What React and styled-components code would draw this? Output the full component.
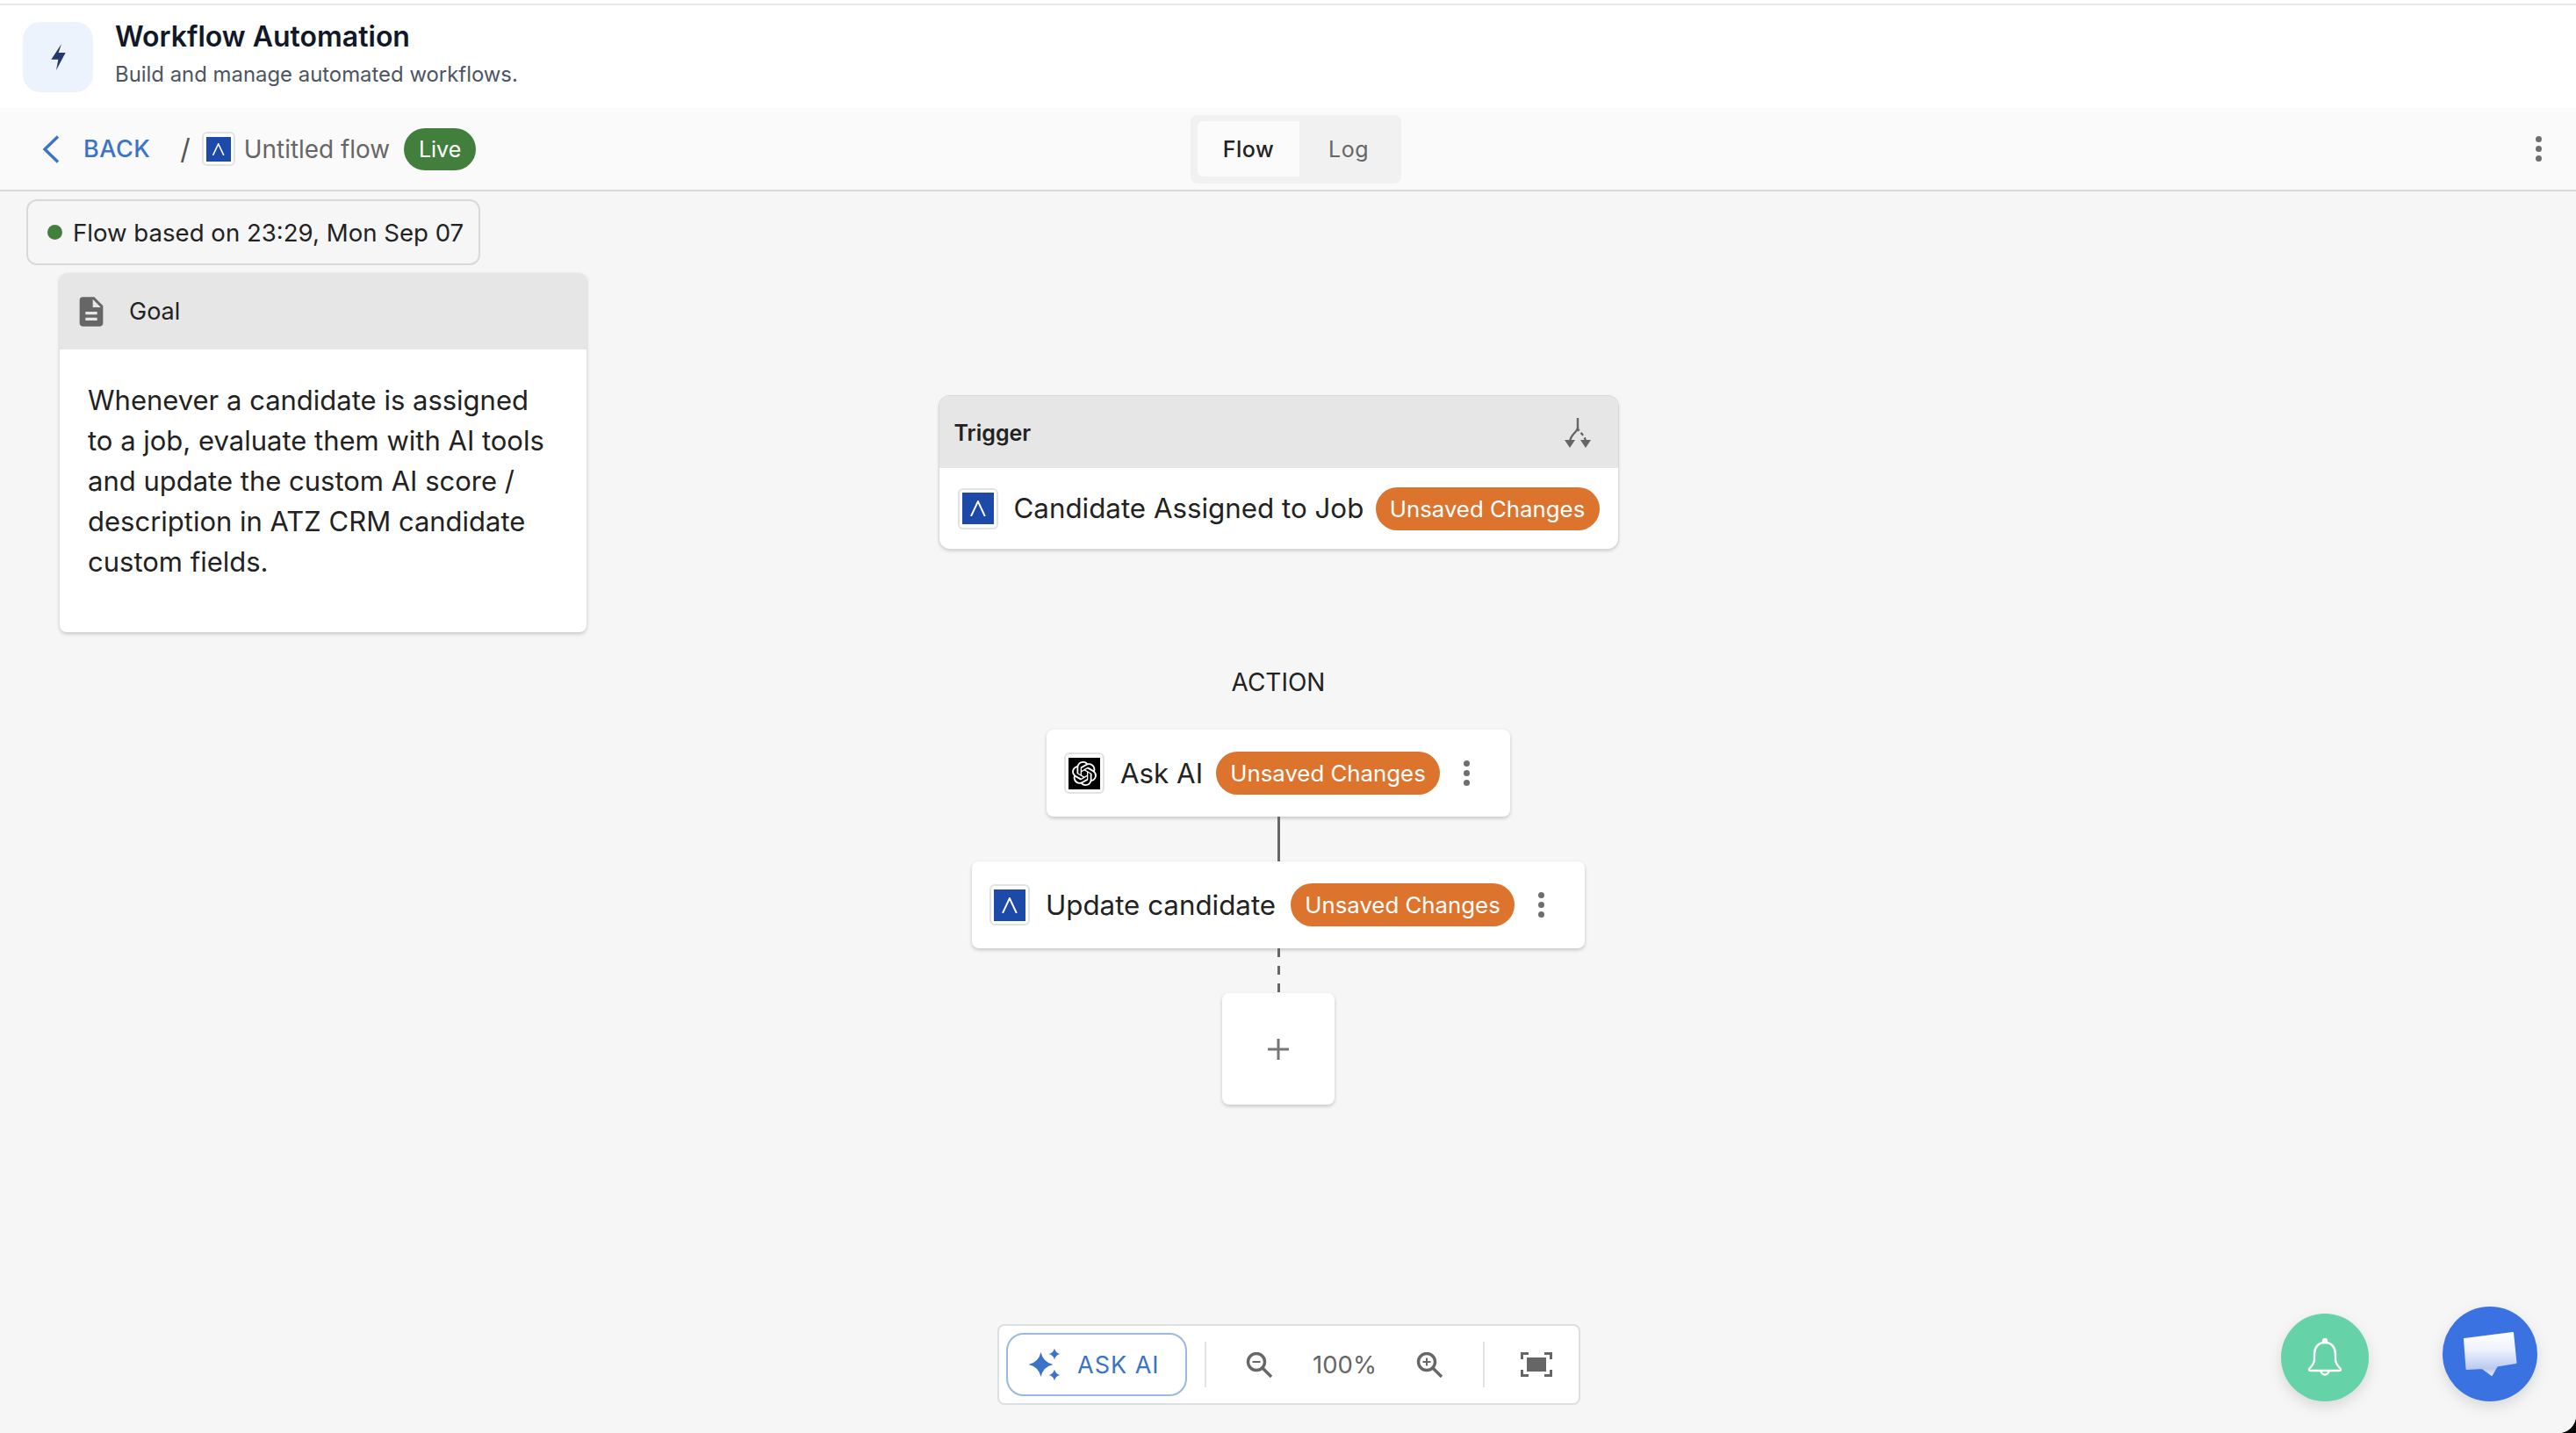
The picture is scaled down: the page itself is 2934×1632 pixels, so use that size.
import React from 'react';
import styled, { createGlobalStyle } from 'styled-components';
import { SiOpenai } from 'react-icons/si';

const GlobalStyle = createGlobalStyle`
  html, body {
    margin: 0;
    padding: 0;
    background: #000;
  }
  * {
    box-sizing: border-box;
  }
`;

const Page = styled.div`
  position: relative;
  display: flex;
  flex-direction: column;
  width: 2934px;
  height: 1632px;
  padding-top: 4px;
  overflow: hidden;
  background: #fff;
  border-bottom-right-radius: 20px;
  font-family: Inter, "Liberation Sans", sans-serif;
  color: #222;
`;

const Header = styled.header`
  display: flex;
  align-items: center;
  gap: 25px;
  flex: 0 0 119px;
  padding-left: 26px;
  border-top: 2px solid #e5e7eb;
`;

const HeaderIcon = styled.div`
  display: flex;
  align-items: center;
  justify-content: center;
  width: 80px;
  height: 80px;
  border-radius: 20px;
  background: #edf3fd;
`;

const HeaderText = styled.div`
  display: flex;
  flex-direction: column;
  gap: 10px;
  margin-top: -6px;
`;

const Title = styled.h1`
  margin: 0;
  font-size: 32px;
  line-height: 36px;
  font-weight: 600;
  color: #111827;
`;

const Subtitle = styled.p`
  margin: 0;
  font-size: 23.9px;
  line-height: 30px;
  color: #4b5563;
`;

const NavBar = styled.nav`
  display: grid;
  grid-template-columns: 1308px 240px 1fr;
  align-items: center;
  flex: 0 0 95px;
  padding-left: 48px;
  padding-right: 31px;
  background: #fafafa;
  border-bottom: 2px solid #d9d9d9;
`;

const Crumbs = styled.div`
  display: flex;
  align-items: center;
`;

const BackLink = styled.a`
  display: flex;
  align-items: center;
  gap: 27px;
  font-size: 27px;
  font-weight: 500;
  letter-spacing: 0.5px;
  color: #3a73c8;
`;

const Slash = styled.span`
  margin: 0 13px 0 34px;
  font-size: 32px;
  color: #555;
`;

const FlowName = styled.span`
  margin: 0 16px 0 10px;
  font-size: 27.9px;
  color: #666;
`;

const LiveBadge = styled.span`
  display: flex;
  align-items: center;
  justify-content: center;
  width: 82px;
  height: 48px;
  border-radius: 24px;
  background: #437f3c;
  color: #fff;
  font-size: 25px;
`;

const Tabs = styled.div`
  display: flex;
  align-items: center;
  height: 78px;
  padding: 0 4px 0 8px;
  border-radius: 8px;
  background: #f1f1f1;
`;

const Tab = styled.button`
  flex: none;
  width: ${(p) => (p.$active ? '116px' : '112px')};
  height: 63px;
  padding: 0;
  border: 0;
  border-radius: 6px 0 0 6px;
  background: ${(p) => (p.$active ? '#fbfbfb' : 'transparent')};
  color: ${(p) => (p.$active ? '#222' : '#666')};
  font-family: inherit;
  font-size: 25px;
  font-weight: ${(p) => (p.$active ? 500 : 400)};
  letter-spacing: 0.5px;
`;

const NavMenu = styled.div`
  justify-self: end;
  display: flex;
`;

const Dots = styled.span`
  display: flex;
  flex-direction: column;
  align-items: center;
  justify-content: center;
  gap: 4px;
  width: 24px;
  flex: none;

  i {
    width: 7px;
    height: 7px;
    border-radius: 50%;
    background: #6e6e6e;
  }
`;

const Canvas = styled.main`
  position: relative;
  flex: 1;
  display: flex;
  flex-direction: column;
  align-items: center;
  padding: 233px 22px 0 0;
  background: #f6f6f6;
`;

const LeftRail = styled.aside`
  position: absolute;
  left: 30px;
  top: 9px;
  display: flex;
  flex-direction: column;
  gap: 9px;
  width: 638px;
`;

const StatusChip = styled.div`
  display: flex;
  align-items: center;
  gap: 12px;
  width: 517px;
  height: 75px;
  padding-left: 22px;
  border: 2px solid #d9d9d9;
  border-radius: 12px;
  font-size: 27.6px;
  color: #222;

  i {
    width: 17px;
    height: 17px;
    border-radius: 50%;
    background: #437f3c;
  }
`;

const GoalCard = styled.section`
  align-self: flex-end;
  width: 600px;
  height: 409px;
  border-radius: 8px;
  background: #fff;
  overflow: hidden;
  box-shadow: 0 2px 4px rgba(0, 0, 0, 0.2);
`;

const GoalHeader = styled.div`
  display: flex;
  align-items: center;
  gap: 23px;
  height: 87px;
  padding-left: 16px;
  background: #e6e6e6;
  font-size: 27px;
`;

const GoalBody = styled.p`
  margin: 0;
  padding: 35px 0 0 32px;
  max-width: 560px;
  font-size: 31px;
  line-height: 46px;
  color: #222;
`;

const TriggerCard = styled.section`
  width: 773px;
  border-radius: 12px;
  overflow: hidden;
  background: #fff;
  box-shadow: 0 0 0 1px #d8d8d8, 0 2px 4px rgba(0, 0, 0, 0.2);
`;

const TriggerHeader = styled.div`
  display: flex;
  align-items: center;
  justify-content: space-between;
  height: 82px;
  padding: 2px 31px 0 17px;
  background: #e6e6e6;
  font-size: 25px;
  font-weight: 600;
`;

const TriggerRow = styled.div`
  display: flex;
  align-items: center;
  gap: 18px;
  height: 92px;
  padding: 0 21px 0 21px;
`;

const NodeLabel = styled.span`
  flex: 1;
  min-width: 0;
  font-size: 31.3px;
  white-space: nowrap;
  color: #222;
`;

const ActionLabel = styled.div`
  margin: 136px 0 38px;
  font-size: 28px;
  line-height: 32px;
  color: #222;
`;

const NodeCard = styled.div`
  display: flex;
  align-items: center;
  gap: 18px;
  width: ${(p) => p.$width}px;
  height: 99px;
  padding: 0 38px 0 20px;
  border-radius: 8px;
  background: #fff;
  box-shadow: 0 2px 4px rgba(0, 0, 0, 0.2);
`;

const Connector = styled.div`
  flex: 0 0 51px;
  width: 3px;
  background: ${(p) =>
    p.$dashed
      ? 'repeating-linear-gradient(to bottom, #666 0 10px, transparent 10px 20px)'
      : '#666'};
`;

const AddNode = styled.button`
  display: flex;
  align-items: center;
  justify-content: center;
  width: 128px;
  height: 127px;
  padding: 0;
  border: 0;
  border-radius: 8px;
  background: #fff;
  box-shadow: 0 2px 4px rgba(0, 0, 0, 0.2);
`;

const UnsavedPill = styled.span`
  display: flex;
  align-items: center;
  justify-content: center;
  flex: none;
  width: 255px;
  height: 49px;
  border-radius: 25px;
  background: #dc742d;
  color: #fff;
  font-size: 25.8px;
  white-space: nowrap;
`;

const LogoFrame = styled.span`
  display: flex;
  align-items: center;
  justify-content: center;
  flex: none;
  width: ${(p) => p.$size + 10}px;
  height: ${(p) => p.$size + 11}px;
  border: 2px solid #dfe3e8;
  border-radius: 6px;
  background: #fff;
`;

const LogoMark = styled.span`
  display: flex;
  align-items: center;
  justify-content: center;
  width: ${(p) => p.$size}px;
  height: ${(p) => p.$size}px;
  background: ${(p) => p.$bg};
  color: #fff;
`;

const ToolBar = styled.div`
  position: absolute;
  left: 50%;
  bottom: 32px;
  margin-left: 1px;
  transform: translateX(-50%);
  display: flex;
  align-items: center;
  width: 664px;
  height: 92px;
  padding: 0 8px;
  border: 2px solid #dcdfe2;
  border-radius: 8px;
  background: #fff;
`;

const AskButton = styled.button`
  display: flex;
  align-items: center;
  gap: 18px;
  flex: none;
  width: 206px;
  height: 72px;
  padding: 0 0 0 23px;
  margin-right: 20px;
  border: 2px solid #9bb8de;
  border-radius: 20px;
  background: #fff;
  color: #3a73c8;
  font-family: inherit;
  font-size: 27px;
  letter-spacing: 1px;
`;

const ToolDivider = styled.span`
  flex: none;
  width: 2px;
  height: 52px;
  background: #e3e3e3;
`;

const ZoomGroup = styled.div`
  display: flex;
  align-items: center;
  gap: 45px;
  margin: 0 45px;
  font-size: 27.5px;
  color: #666;
`;

const FocusButton = styled.span`
  display: flex;
  margin-left: 41px;
`;

const FabRow = styled.div`
  position: absolute;
  right: 44px;
  bottom: 36px;
  display: flex;
  align-items: flex-end;
  gap: 84px;
`;

const Fab = styled.button`
  display: flex;
  align-items: center;
  justify-content: center;
  width: ${(p) => p.$size}px;
  height: ${(p) => p.$size}px;
  padding: 0;
  border: 0;
  border-radius: 50%;
  background: ${(p) => p.$bg};
  box-shadow: 0 6px 16px rgba(0, 0, 0, 0.12);
`;

const CaretGlyph = ({ size }) => (
  <svg width={size * 0.55} height={size * 0.5} viewBox="0 0 20 18" fill="none" stroke="#fff" strokeWidth="2">
    <path d="M2 18 L10 1 L18 18" />
  </svg>
);

const AppLogo = ({ size }) => (
  <LogoFrame $size={size}>
    <LogoMark $size={size} $bg="#1d49a8">
      <CaretGlyph size={size} />
    </LogoMark>
  </LogoFrame>
);

const MoreDots = () => (
  <Dots>
    <i />
    <i />
    <i />
  </Dots>
);

const Star = (cx, cy, r) => {
  const k = r * 0.18;
  return `M${cx} ${cy - r} Q${cx + k} ${cy - k} ${cx + r} ${cy} Q${cx + k} ${cy + k} ${cx} ${cy + r} Q${cx - k} ${cy + k} ${cx - r} ${cy} Q${cx - k} ${cy - k} ${cx} ${cy - r}Z`;
};

const MagnifierIcon = ({ plus }) => (
  <svg width="31" height="29" viewBox="0 0 31 29" fill="none" stroke="#666" strokeWidth="3.4">
    <circle cx="12" cy="11" r="9.5" />
    <path d="M19 18 L29 28" />
    <path d="M7.5 11 H16.5" strokeWidth="2" />
    {plus && <path d="M12 6.5 V15.5" strokeWidth="2" />}
  </svg>
);

function App() {
  return (
    <Page>
      <GlobalStyle />
      <Header>
        <HeaderIcon>
          <svg width="17" height="30" viewBox="0 0 49 90" fill="#23396f">
            <path d="M35 0 L0 53 L24 53 L17 90 L49 30 L25 30 Z" />
          </svg>
        </HeaderIcon>
        <HeaderText>
          <Title>Workflow Automation</Title>
          <Subtitle>Build and manage automated workflows.</Subtitle>
        </HeaderText>
      </Header>

      <NavBar>
        <Crumbs>
          <BackLink>
            <svg width="20" height="32" viewBox="0 0 20 32" fill="none" stroke="#3a73c8" strokeWidth="3.4">
              <path d="M18 1.5 L3 16 L18 30.5" />
            </svg>
            BACK
          </BackLink>
          <Slash>/</Slash>
          <AppLogo size={28} />
          <FlowName>Untitled flow</FlowName>
          <LiveBadge>Live</LiveBadge>
        </Crumbs>
        <Tabs>
          <Tab $active>Flow</Tab>
          <Tab>Log</Tab>
        </Tabs>
        <NavMenu>
          <MoreDots />
        </NavMenu>
      </NavBar>

      <Canvas>
        <LeftRail>
          <StatusChip>
            <i />
            Flow based on 23:29, Mon Sep 07
          </StatusChip>
          <GoalCard>
            <GoalHeader>
              <svg width="40" height="40" viewBox="0 0 24 24" fill="#666">
                <path d="M14 2H6c-1.1 0-1.99.9-1.99 2L4 20c0 1.1.89 2 1.99 2H18c1.1 0 2-.9 2-2V8l-6-6zm2 16H8v-2h8v2zm0-4H8v-2h8v2zm-3-5V3.5L18.5 9H13z" />
              </svg>
              Goal
            </GoalHeader>
            <GoalBody>
              Whenever a candidate is assigned to a job, evaluate them with AI tools and update the custom AI score / description in ATZ CRM candidate custom fields.
            </GoalBody>
          </GoalCard>
        </LeftRail>

        <TriggerCard>
          <TriggerHeader>
            Trigger
            <svg width="30" height="34" viewBox="0 0 30 34" fill="none" stroke="#666" strokeWidth="2.4">
              <path d="M15 0 V11 C15 16 7 18 6 27" />
              <path d="M15 11 C15 16 23 18 24 27" strokeDasharray="4 3" />
              <path d="M0 25 H12 L6 34 Z M18 25 H30 L24 34 Z" fill="#666" stroke="none" />
            </svg>
          </TriggerHeader>
          <TriggerRow>
            <AppLogo size={36} />
            <NodeLabel>Candidate Assigned to Job</NodeLabel>
            <UnsavedPill>Unsaved Changes</UnsavedPill>
          </TriggerRow>
        </TriggerCard>

        <ActionLabel>ACTION</ActionLabel>

        <NodeCard $width={528}>
          <LogoFrame $size={36}>
            <LogoMark $size={36} $bg="#000">
              <SiOpenai size={28} />
            </LogoMark>
          </LogoFrame>
          <NodeLabel>Ask AI</NodeLabel>
          <UnsavedPill>Unsaved Changes</UnsavedPill>
          <MoreDots />
        </NodeCard>
        <Connector />
        <NodeCard $width={698}>
          <AppLogo size={36} />
          <NodeLabel>Update candidate</NodeLabel>
          <UnsavedPill>Unsaved Changes</UnsavedPill>
          <MoreDots />
        </NodeCard>
        <Connector $dashed />
        <AddNode>
          <svg width="24" height="24" viewBox="0 0 24 24" stroke="#777" strokeWidth="3">
            <path d="M12 0 V24 M0 12 H24" />
          </svg>
        </AddNode>

        <ToolBar>
          <AskButton>
            <svg width="38" height="36" viewBox="0 0 38 36" fill="#3a73c8">
              <path d={Star(14.5, 18, 14)} />
              <path d={Star(30, 6, 6.5)} />
              <path d={Star(30, 30, 6.5)} />
            </svg>
            ASK AI
          </AskButton>
          <ToolDivider />
          <ZoomGroup>
            <MagnifierIcon />
            <span>100%</span>
            <MagnifierIcon plus />
          </ZoomGroup>
          <ToolDivider />
          <FocusButton>
            <svg width="36" height="28" viewBox="0 0 36 28" fill="none" stroke="#666" strokeWidth="3">
              <path d="M1.5 8 V1.5 H9 M27 1.5 H34.5 V8 M34.5 20 V26.5 H27 M9 26.5 H1.5 V20" />
              <rect x="7" y="6" width="22" height="16" fill="#666" stroke="none" />
            </svg>
          </FocusButton>
        </ToolBar>
      </Canvas>

      <FabRow>
        <Fab $size={100} $bg="#66d2a8">
          <svg width="40" height="44" viewBox="0 0 40 44" fill="none" stroke="#fff" strokeWidth="2.4">
            <circle cx="20" cy="3" r="2" fill="#fff" />
            <path d="M20 5 C12 5 8 11 8 18 V24 C8 29 5 32 2.5 34.5 C1.5 35.5 2 37 3.5 37 H36.5 C38 37 38.5 35.5 37.5 34.5 C35 32 32 29 32 24 V18 C32 11 28 5 20 5 Z" />
            <path d="M15.5 37 a4.5 4.5 0 0 0 9 0" />
          </svg>
        </Fab>
        <Fab $size={108} $bg="#3a72e2">
          <svg width="62" height="51" viewBox="0 0 62 51">
            <defs>
              <linearGradient id="bubble" x1="0" y1="0" x2="0" y2="1">
                <stop offset="0" stopColor="#ffffff" />
                <stop offset="0.4" stopColor="#eef2fc" />
                <stop offset="0.85" stopColor="#b9c9f0" />
                <stop offset="1" stopColor="#dfe6f8" />
              </linearGradient>
            </defs>
            <path
              d="M2 8 L57 1 L60.5 35 L39 38.5 L33 49 L22 41 L4.5 42 Z"
              fill="url(#bubble)"
              stroke="url(#bubble)"
              strokeWidth="2"
              strokeLinejoin="round"
            />
          </svg>
        </Fab>
      </FabRow>
    </Page>
  );
}

export default App;
